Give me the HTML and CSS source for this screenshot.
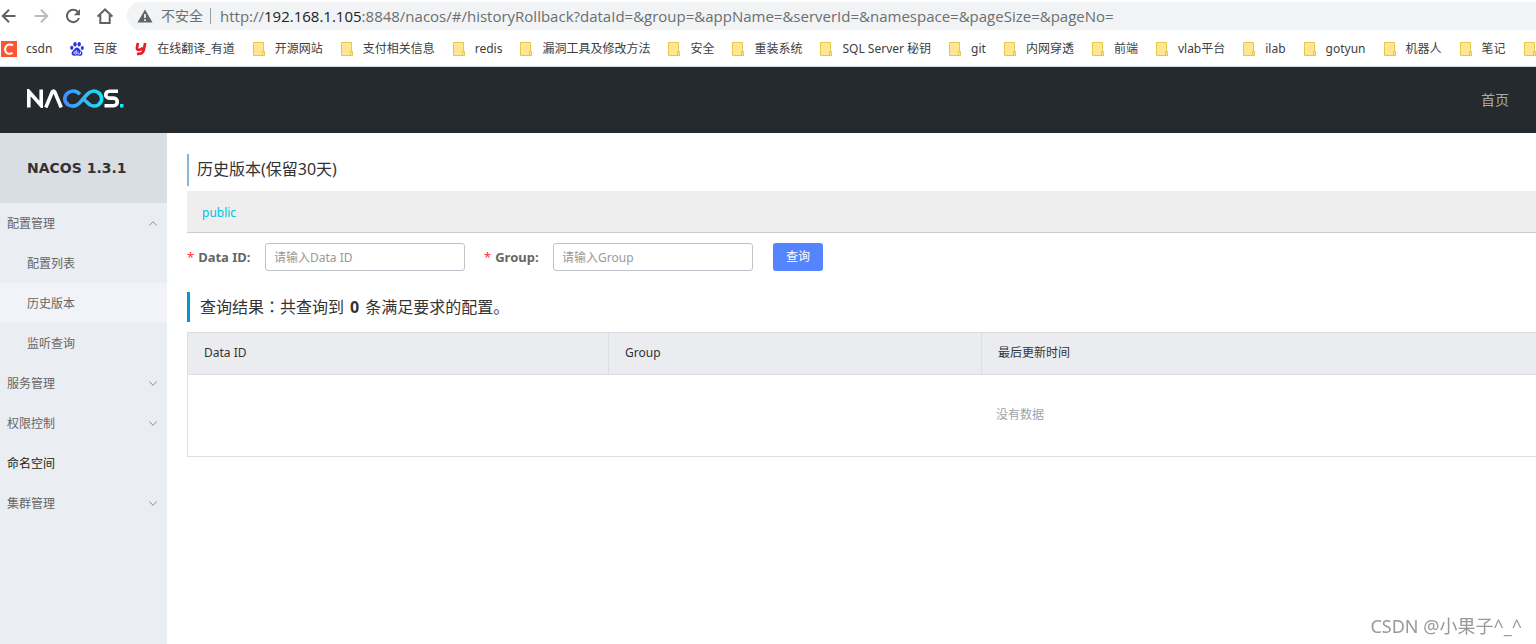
FILE: index.html
```html
<!DOCTYPE html>
<html lang="zh-CN">
<head>
<meta charset="utf-8">
<title>Nacos</title>
<link rel="stylesheet" href="styles.css">
</head>
<body>
<svg width="0" height="0" class="defs" aria-hidden="true">
  <symbol id="folder" viewBox="0 0 12 14"><path d="M.5.5h10v9h1v4h-11z" fill="#ffe693" stroke="#e8c64a"/><path d="M9.500 13.500v-4h2v4z" fill="#ffe693" stroke="#e8c64a"/></symbol>
  <symbol id="chevron" viewBox="0 0 8 5"><path d="M.4.5 4 4.300 7.600.5" fill="none" stroke="#8a8d92"/></symbol>
</svg>
<div class="browser">
  <div class="toolbar">
    <button class="nav" aria-label="后退"><svg width="16" height="16" viewBox="0 0 16 16"><path d="M14.500 8H2M8 1.800 1.800 8 8 14.200" fill="none" stroke="#5f6368" stroke-width="2"/></svg></button>
    <button class="nav" aria-label="前进"><svg width="16" height="16" viewBox="0 0 16 16"><path d="M1.500 8H14M8 1.800 14.200 8 8 14.200" fill="none" stroke="#babcbe" stroke-width="2"/></svg></button>
    <button class="nav" aria-label="刷新"><svg width="16" height="16" viewBox="0 0 16 16"><path d="M13.200 4.300A6.200 6.200 0 1 0 14 10" fill="none" stroke="#5f6368" stroke-width="2"/><path d="M15 1v6.200H8.800z" fill="#5f6368"/></svg></button>
    <button class="nav" aria-label="主页"><svg width="16" height="16" viewBox="0 0 16 16"><path d="M.6 8.600 8 1.500l7.400 7.100M3.300 7v8h9.400V7" fill="none" stroke="#5f6368" stroke-width="2"/></svg></button>
    <div class="address">
      <svg width="16" height="14" viewBox="0 0 16 14"><path d="M8 .5 15.500 13.500H.5z" fill="#5f6368"/><path d="M8 5v4M8 10.300v1.700" stroke="#fff" stroke-width="1.600"/></svg>
      <span class="insecure">不安全</span>
      <span class="url">http://<b>192.168.1.105</b>:8848/nacos/#/historyRollback?dataId=&amp;group=&amp;appName=&amp;serverId=&amp;namespace=&amp;pageSize=&amp;pageNo=</span>
    </div>
  </div>
  <nav class="bookmarks">
    <a href="#" class="site"><svg width="16" height="16" viewBox="0 0 16 16"><path d="M0 0h16v16H0z" fill="#fc5531"/><path d="M12 4.600C10.500 3.300 6.500 2.900 4.900 5.500c-1.600 2.700-.7 6.700 2.600 7.200 1.500.2 3-.2 4-.8" fill="none" stroke="#fff" stroke-width="2"/></svg>csdn</a>
    <a href="#" class="site"><svg width="14" height="14" viewBox="0 0 14 14" fill="#2932e1"><ellipse cx="5" cy="2.300" rx="1.700" ry="2.200"/><ellipse cx="9.200" cy="2.300" rx="1.700" ry="2.200"/><ellipse cx="1.800" cy="5.800" rx="1.600" ry="2.100"/><ellipse cx="12.300" cy="6" rx="1.500" ry="2.100"/><path d="M7 5.500c2 0 2.600 2 4 3.200 3 2.500 1 5.800-2 5-1.300-.3-2.700-.3-4 0-3 .8-4.800-2.600-2-5C4.400 7.500 5 5.500 7 5.500z"/><path d="M6.300 8v4H5a1 1 0 0 1 0-2.200h1.300M8 9.500V12h2.500V9.500" fill="none" stroke="#fff" stroke-width=".8"/></svg>百度</a>
    <a href="#" class="site"><svg width="13" height="14" viewBox="0 0 13 14"><path d="M2.900 1 2 5.500Q1.600 8 4 7.800 7 7.500 7.800 5.500M10.200 1 8.600 8.700Q7.500 12.300 2 11.900" fill="none" stroke="#e32226" stroke-width="2.800"/></svg>在线翻译_有道</a>
    <a href="#"><svg width="12" height="14"><use href="#folder"/></svg>开源网站</a>
    <a href="#"><svg width="12" height="14"><use href="#folder"/></svg>支付相关信息</a>
    <a href="#"><svg width="12" height="14"><use href="#folder"/></svg>redis</a>
    <a href="#"><svg width="12" height="14"><use href="#folder"/></svg>漏洞工具及修改方法</a>
    <a href="#"><svg width="12" height="14"><use href="#folder"/></svg>安全</a>
    <a href="#"><svg width="12" height="14"><use href="#folder"/></svg>重装系统</a>
    <a href="#"><svg width="12" height="14"><use href="#folder"/></svg>SQL Server 秘钥</a>
    <a href="#"><svg width="12" height="14"><use href="#folder"/></svg>git</a>
    <a href="#"><svg width="12" height="14"><use href="#folder"/></svg>内网穿透</a>
    <a href="#"><svg width="12" height="14"><use href="#folder"/></svg>前端</a>
    <a href="#"><svg width="12" height="14"><use href="#folder"/></svg>vlab平台</a>
    <a href="#"><svg width="12" height="14"><use href="#folder"/></svg>ilab</a>
    <a href="#"><svg width="12" height="14"><use href="#folder"/></svg>gotyun</a>
    <a href="#"><svg width="12" height="14"><use href="#folder"/></svg>机器人</a>
    <a href="#"><svg width="12" height="14"><use href="#folder"/></svg>笔记</a>
    <a href="#" aria-label="更多"><svg width="12" height="14"><use href="#folder"/></svg></a>
  </nav>
</div>
<header class="header">
  <a href="#" class="logo" aria-label="NACOS"><svg width="97" height="19" viewBox="0 0 97 19" fill="none" stroke-width="3.600">
    <defs><linearGradient id="loop" gradientUnits="userSpaceOnUse" x1="36" y1="0" x2="76" y2="0"><stop offset="0" stop-color="#498bff"/><stop offset="1" stop-color="#16e6f5"/></linearGradient></defs>
    <path d="M1.800 18.500V2.500L14.200 16.500V.5M18.800 18.500 25.200 3q1.300-2 2.600 0L34.200 18.500" stroke="#fff"/>
    <path d="M53 5.200C49.500 1.600 45 1.400 41.500 3.500 36.500 6.700 36.500 12.800 41.500 16 45.500 18 49.500 17 52.500 14L60 5.500C63.500 1.600 68 1.400 71.200 3.500c4.600 3.300 4.600 9.200 0 12.500-3.700 2-8 1-11-2.500L55.500 9" stroke="url(#loop)"/>
    <path d="M91 2.300H82.500c-5 0-5 6.800 0 6.800h4c5 0 5 7.600 0 7.600H77.500" stroke="#fff"/>
    <path d="M93 15h3.500v3.500H93z" fill="#16e6f5"/>
  </svg></a>
  <a href="#" class="home">首页</a>
</header>
<div class="layout">
  <aside class="sidebar">
    <h1>NACOS 1.3.1</h1>
    <nav class="menu">
      <a href="#">配置管理<svg class="up" width="8" height="5"><use href="#chevron"/></svg></a>
      <a href="#" class="sub">配置列表</a>
      <a href="#" class="sub current">历史版本</a>
      <a href="#" class="sub">监听查询</a>
      <a href="#">服务管理<svg width="8" height="5"><use href="#chevron"/></svg></a>
      <a href="#">权限控制<svg width="8" height="5"><use href="#chevron"/></svg></a>
      <a href="#" class="leaf">命名空间</a>
      <a href="#">集群管理<svg width="8" height="5"><use href="#chevron"/></svg></a>
    </nav>
  </aside>
  <main class="main">
    <h2 class="title">历史版本(保留30天)</h2>
    <div class="namespaces"><a href="#">public</a></div>
    <form class="search">
      <label for="data-id"><i>*</i>Data ID:</label>
      <input id="data-id" type="text" placeholder="请输入Data ID">
      <label for="group" class="second"><i>*</i>Group:</label>
      <input id="group" type="text" placeholder="请输入Group">
      <button type="button">查询</button>
    </form>
    <h3 class="result">查询结果<span class="colon" lang="zh-TW">：</span>共查询到<strong>0</strong>条满足要求的配置。</h3>
    <table class="history">
      <thead><tr><th class="col-id">Data ID</th><th class="col-group">Group</th><th>最后更新时间</th></tr></thead>
      <tbody><tr><td colspan="3">没有数据</td></tr></tbody>
    </table>
  </main>
</div>
<div class="watermark">CSDN @小果子^_^</div>
</body>
</html>
```
FILE: styles.css
```css
* { box-sizing: border-box; }
body {
  margin: 0;
  min-height: 100vh;
  display: flex;
  flex-direction: column;
  overflow: hidden;
  background: #fff;
  color: #333;
  font: 12px/20px "Noto Sans", "Noto Sans CJK SC", sans-serif;
}
a { color: inherit; text-decoration: none; }
button, input { font: inherit; }
svg { flex: none; display: block; }
.defs { position: absolute; }

.browser { border-bottom: 1px solid #d5d8da; overflow: hidden; }
.toolbar { display: flex; align-items: center; gap: 16px; height: 32px; padding-left: 1px; }
.nav { padding: 0; border: 0; background: none; }
.address {
  flex: 1;
  display: flex;
  align-items: center;
  height: 28px;
  margin-left: -2px;
  padding-left: 10px;
  border-radius: 14px 0 0 14px;
  background: #f1f3f4;
  color: #6b6f73;
  font-size: 14px;
  white-space: nowrap;
}
.insecure { margin-left: 8px; padding-right: 7px; border-right: 1px solid #9a9da1; line-height: 16px; }
.url { margin-left: 9px; font-family: "Open Sans", sans-serif; font-size: 15px; }
.url b { color: #202124; font-weight: 400; }
.bookmarks { display: flex; height: 34px; padding-left: 1px; gap: 18px; align-items: center; color: #3c4043; white-space: nowrap; }
.bookmarks a { display: flex; align-items: center; gap: 10px; }
.bookmarks .site { gap: 9px; }

.header { display: flex; align-items: center; justify-content: space-between; height: 66px; padding: 0 27px; background: #252a2f; }
.logo { padding-bottom: 4px; }
.home { color: #a8aaac; font-size: 14px; }

.layout { flex: 1; display: flex; }
.sidebar { flex: none; width: 167px; background: #eaedf1; }
.sidebar h1 { margin: 0; padding-left: 27px; background: #d9dde4; color: #333; font: bold 14px/70px "DejaVu Sans", sans-serif; }
.menu a { display: flex; align-items: center; justify-content: space-between; height: 40px; padding: 1px 10px 0 7px; color: #666; }
.menu .sub { padding-left: 27px; }
.menu .current { background: #f1f3f8; }
.menu .leaf { color: #222; }
.up { transform: rotate(180deg); }

.main { flex: 1; min-width: 0; padding: 21px 0 0 20px; overflow: hidden; }
.title { margin: 0 0 5px; padding: 0 0 2px 8px; border-left: 2px solid #86b5dc; font-weight: 400; font-size: 16px; line-height: 30px; }
.namespaces { padding: 12px 15px 9px; border-bottom: 1px solid #ccc; background: #eee; color: #00c1de; }
.search { display: flex; align-items: center; margin-top: 10px; color: #666; }
.search label { width: 78px; font-weight: 700; font-size: 13px; }
.search .second { width: 69px; margin-left: 19px; }
.search i { margin-right: 4px; color: #f33; font-style: normal; font-weight: 400; }
.search input { width: 200px; height: 28px; padding: 0 8px; border: 1px solid #c0c2cc; border-radius: 3px; background: #fff; }
.search input::placeholder { color: #999; }
.search button { height: 28px; margin-left: 20px; padding: 0 13px; border: 0; border-radius: 3px; background: #5584ff; color: #fff; }
.result { height: 30px; margin: 21px 0 10px; padding-left: 10px; border-left: 3px solid #09c; font-weight: 400; font-size: 16px; line-height: 28px; }
.result strong { margin: 0 6px; }
.colon { font-family: "Noto Sans CJK TC", sans-serif; }
.history { width: 100%; min-width: 1666px; border-collapse: collapse; table-layout: fixed; }
.history th { height: 42px; padding: 0 16px 2px; border: 1px solid #dcdee3; background: #ebecf0; font-weight: 400; text-align: left; }
.history td { height: 82px; padding: 0 0 2px; border: 1px solid #dcdee3; color: #a0a2ad; text-align: center; }
.col-id { width: 421px; }
.col-group { width: 373px; }
.watermark { position: fixed; right: 14px; bottom: 8px; color: #999; font-size: 18px; }
```
